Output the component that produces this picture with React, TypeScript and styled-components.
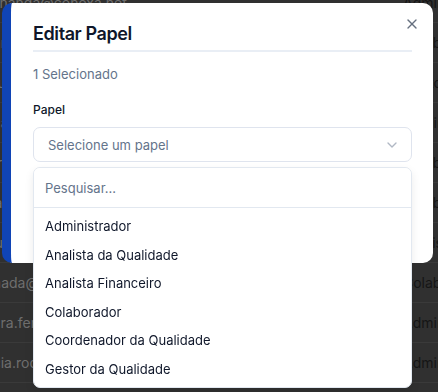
import styled, { createGlobalStyle } from 'styled-components';
import { ChevronDown, X } from 'lucide-react';

const GlobalStyle = createGlobalStyle`
  html, body {
    margin: 0;
    padding: 0;
    background: #303030;
    font-family: Inter, "Noto Sans", sans-serif;
    overflow: hidden;
  }
  * { box-sizing: border-box; }
`;

const Page = styled.div`
  width: 438px;
  height: 392px;
  overflow: hidden;
  position: relative;
`;

// the users table behind the dialog, scrolled a little
const UserTable = styled.div`
  margin-top: -17px;
  margin-left: -19px;
  display: flex;
  flex-direction: column;
`;

const UserRow = styled.div`
  display: grid;
  grid-template-columns: 422px 200px;
  align-items: center;
  height: 40px;
  border-bottom: 1px solid #3a3a3a;
  font-size: 14px;
  white-space: nowrap;
`;

const EmailCell = styled.span`
  color: #6e6e6e;
`;

const RoleCell = styled.span`
  color: #151515;
`;

const Overlay = styled.div`
  position: fixed;
  inset: 0;
  display: flex;
  justify-content: flex-start;
  align-items: flex-start;
  padding: 3px 0 0 2px;
`;

const Dialog = styled.div`
  position: relative;
  width: 431px;
  height: 260px;
  background: #ffffff;
  border-left: 9px solid #1044b5;
  border-radius: 10px;
  padding: 19px 21px 0 22px;
`;

const CloseButton = styled.button`
  position: absolute;
  top: 13px;
  right: 13px;
  width: 16px;
  height: 16px;
  padding: 0;
  border: none;
  background: none;
  color: #334155;
  opacity: 0.75;
  display: flex;
  align-items: center;
  justify-content: center;
  cursor: pointer;
`;

const Title = styled.h2`
  margin: 0;
  font-size: 18px;
  line-height: 24px;
  font-weight: 600;
  color: #0f172a;
  letter-spacing: -0.4px;
  padding-bottom: 4px;
  border-bottom: 2px solid #e9eef5;
`;

const SelectedCount = styled.p`
  margin: 12px 0 0;
  font-size: 13px;
  line-height: 20px;
  color: #64748b;
`;

const Field = styled.div`
  margin-top: 18px;
  display: flex;
  flex-direction: column;
  gap: 9px;
`;

const Label = styled.label`
  font-size: 12px;
  line-height: 16px;
  font-weight: 500;
  color: #0f172a;
`;

const SelectWrap = styled.div`
  position: relative;
`;

const Trigger = styled.button`
  width: 100%;
  height: 35px;
  display: flex;
  align-items: center;
  justify-content: space-between;
  padding: 0 11px 0 14px;
  border: 1px solid #dfe4ee;
  border-radius: 7px;
  background: #ffffff;
  font-family: inherit;
  font-size: 13px;
  color: #64748b;
  cursor: pointer;

  svg {
    color: #64748b;
    opacity: 0.5;
  }
`;

const Popover = styled.div`
  position: absolute;
  top: calc(100% + 5px);
  left: 0;
  right: 0;
  background: #ffffff;
  border: 1px solid #e2e8f0;
  border-radius: 7px;
  box-shadow: 0 4px 10px rgba(0, 0, 0, 0.08);
  overflow: hidden;
`;

const SearchInput = styled.input`
  display: block;
  width: 100%;
  height: 40px;
  padding: 0 11px;
  border: none;
  border-bottom: 1px solid #e2e8f0;
  outline: none;
  font-family: inherit;
  font-size: 13px;
  color: #0f172a;

  &::placeholder {
    color: #64748b;
  }
`;

const OptionList = styled.ul`
  list-style: none;
  margin: 0;
  padding: 4px;
`;

const Option = styled.li`
  height: 28.5px;
  display: flex;
  align-items: center;
  padding: 0 7px;
  border-radius: 4px;
  font-size: 13px;
  color: #0f172a;
  cursor: pointer;
`;

const users = [
  { email: 'fernanda@conexa.net', role: 'Administrador' },
  { email: 'joana.silva@conexa.net', role: 'Colaborador' },
  { email: 'paulo.souza@conexa.net', role: 'Gestor da Qualidade' },
  { email: 'lucas.lima@conexa.net', role: 'Administrador' },
  { email: 'carla.dias@conexa.net', role: 'Colaborador' },
  { email: 'rita.costa@conexa.net', role: 'Colaborador' },
  { email: 'bruno.reis@conexa.net', role: 'Analista Financeiro' },
  { email: 'amada@conexa.net', role: 'Colaborador' },
  { email: 'laura.ferreira@conexa.net', role: 'Administrador' },
  { email: 'lucia.rodrigues@conexa.net', role: 'Administrador' },
];

const roles = [
  'Administrador',
  'Analista da Qualidade',
  'Analista Financeiro',
  'Colaborador',
  'Coordenador da Qualidade',
  'Gestor da Qualidade',
];

const App = () => {
  return (
    <Page>
      <GlobalStyle />
      <UserTable>
        {users.map((u) => (
          <UserRow key={u.email}>
            <EmailCell>{u.email}</EmailCell>
            <RoleCell>{u.role}</RoleCell>
          </UserRow>
        ))}
      </UserTable>

      <Overlay>
        <Dialog>
          <CloseButton aria-label="Fechar">
            <X size={16} strokeWidth={2} />
          </CloseButton>
          <Title>Editar Papel</Title>
          <SelectedCount>1 Selecionado</SelectedCount>
          <Field>
            <Label>Papel</Label>
            <SelectWrap>
              <Trigger>
                <span>Selecione um papel</span>
                <ChevronDown size={16} strokeWidth={2} />
              </Trigger>
              <Popover>
                <SearchInput placeholder="Pesquisar..." />
                <OptionList>
                  {roles.map((r) => (
                    <Option key={r}>{r}</Option>
                  ))}
                </OptionList>
              </Popover>
            </SelectWrap>
          </Field>
        </Dialog>
      </Overlay>
    </Page>
  );
};

export default App;
